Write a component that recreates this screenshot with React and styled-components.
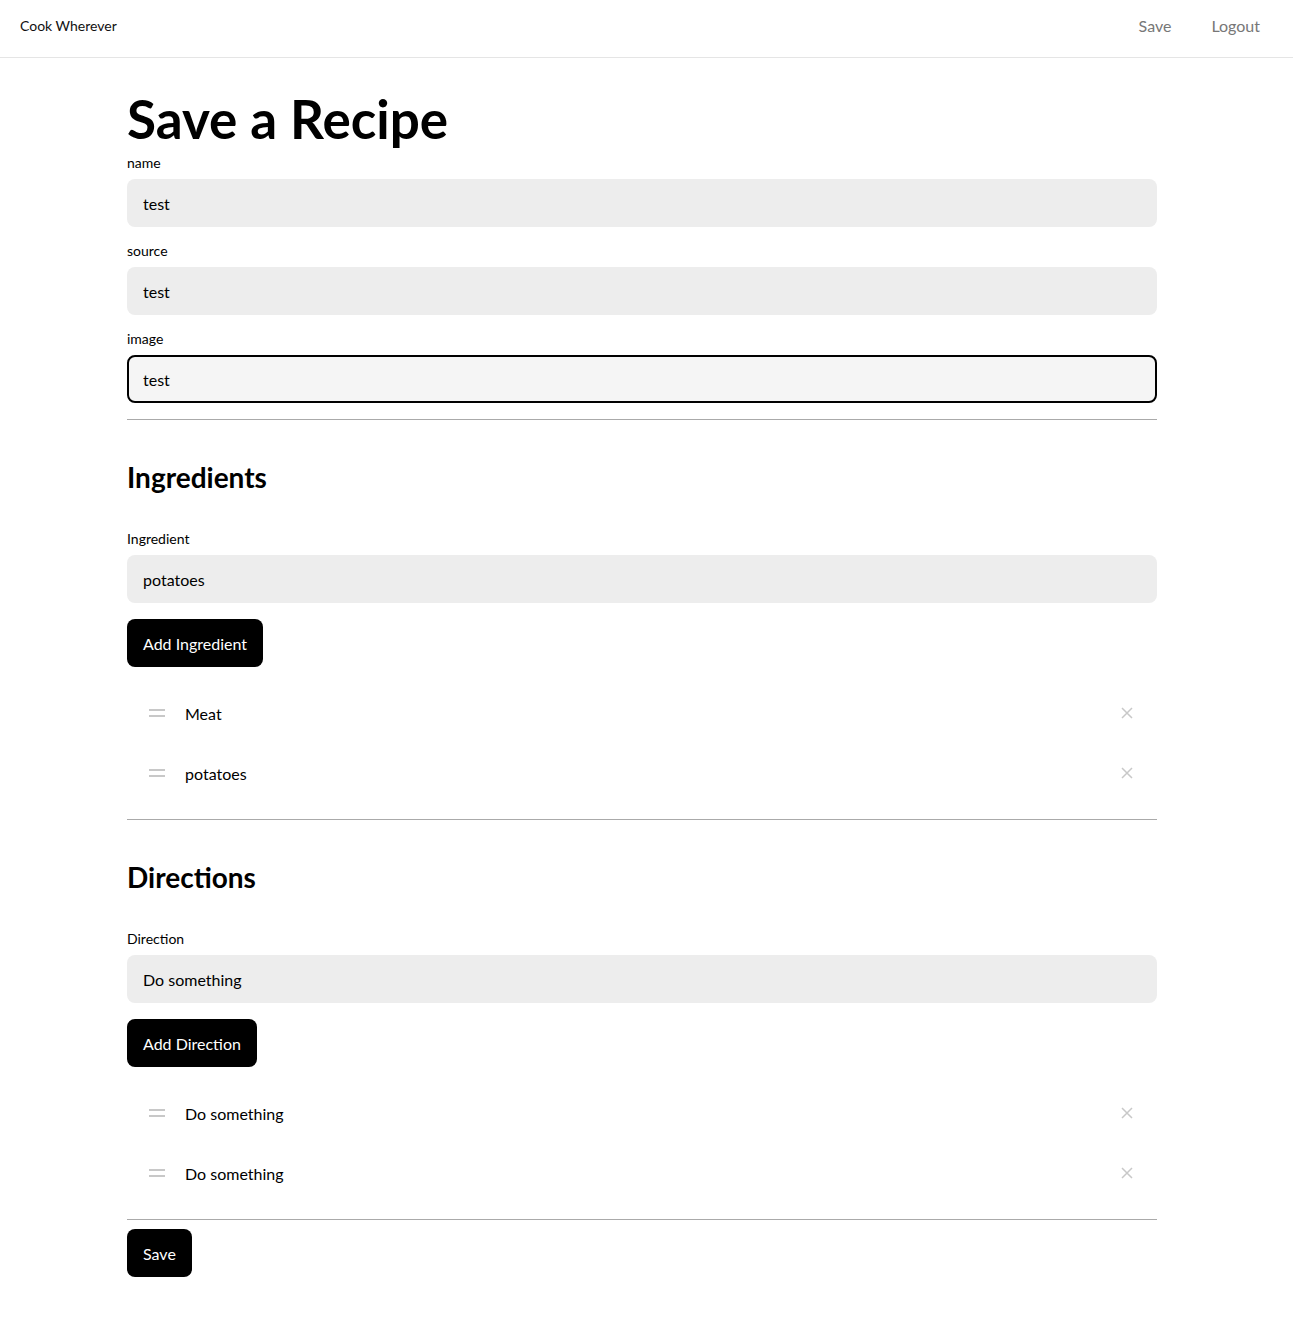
import React from "react";
import styled, { createGlobalStyle } from "styled-components";

const Global = createGlobalStyle`
  * { box-sizing: border-box; }
  body {
    margin: 0;
    font-family: Lato, "Noto Sans", sans-serif;
    color: #000;
    background: #fff;
  }
`;

const Header = styled.header`
  display: flex;
  align-items: center;
  justify-content: space-between;
  height: 58px;
  padding: 0 13px 7px 20px;
  border-bottom: 1px solid #e5e5e5;
`;

const Brand = styled.a`
  font-size: 14px;
  color: #111;
  text-decoration: none;
`;

const Nav = styled.nav`
  display: flex;
`;

const NavLink = styled.a`
  font-size: 16px;
  color: #777;
  padding: 0 20px;
  text-decoration: none;
`;

const Main = styled.main`
  width: 1030px;
  margin-left: 127px;
  padding-bottom: 49px;
`;

const Title = styled.h1`
  font-size: 53px;
  font-weight: 700;
  line-height: 1;
  margin: 34px 0 10px;
`;

const Field = styled.div`
  display: flex;
  flex-direction: column;
  margin-bottom: 16px;
`;

const Label = styled.label`
  font-size: 14px;
  line-height: 16px;
  margin-bottom: 8px;
`;

const Input = styled.input`
  height: 48px;
  border-radius: 8px;
  border: 2px solid ${(p) => (p.$focused ? "#000" : "transparent")};
  background: ${(p) => (p.$focused ? "#f5f5f5" : "#ededed")};
  padding: 0 14px;
  font-family: inherit;
  font-size: 16px;
  color: #000;
  outline: none;
  caret-color: #000;
`;

const Rule = styled.hr`
  border: none;
  border-top: 1px solid #aaa;
  margin: 0;
`;

const Heading = styled.h2`
  font-size: 28px;
  font-weight: 700;
  line-height: 36px;
  margin: 39px 0 36px;
`;

const Button = styled.button`
  align-self: flex-start;
  height: 48px;
  padding: 0 16px;
  border: none;
  border-radius: 8px;
  background: #000;
  color: #fff;
  font-family: inherit;
  font-size: 16px;
  cursor: pointer;
`;

const SaveBar = styled.div`
  display: flex;
  margin-top: 9px;
`;

const List = styled.ul`
  list-style: none;
  margin: 16px 0 16px;
  padding: 0;
`;

const Item = styled.li`
  display: flex;
  align-items: center;
  height: 60px;
  padding: 0 24px 0 22px;
  font-size: 16px;
`;

const ItemText = styled.span`
  flex: 1;
  margin-left: 20px;
`;

const Remove = styled.button`
  border: none;
  background: none;
  padding: 0;
  display: flex;
  cursor: pointer;
`;

const Handle = () => (
  <svg width="16" height="8" viewBox="0 0 16 8">
    <rect x="0" y="0" width="16" height="2" fill="#c8c8c8" />
    <rect x="0" y="6" width="16" height="2" fill="#c8c8c8" />
  </svg>
);

const Cross = () => (
  <svg width="12" height="12" viewBox="0 0 12 12">
    <path d="M1 1L11 11M11 1L1 11" stroke="#c8c8c8" strokeWidth="1.5" />
  </svg>
);

const EntryList = ({ items }) => (
  <List>
    {items.map((t, i) => (
      <Item key={i}>
        <Handle />
        <ItemText>{t}</ItemText>
        <Remove aria-label="remove">
          <Cross />
        </Remove>
      </Item>
    ))}
  </List>
);

const Section = ({ title, label, value, button, items }) => (
  <>
    <Heading>{title}</Heading>
    <Field>
      <Label>{label}</Label>
      <Input defaultValue={value} />
    </Field>
    <Button>{button}</Button>
    <EntryList items={items} />
    <Rule />
  </>
);

export default function App() {
  return (
    <>
      <Global />
      <Header>
        <Brand href="#">Cook Wherever</Brand>
        <Nav>
          <NavLink href="#">Save</NavLink>
          <NavLink href="#">Logout</NavLink>
        </Nav>
      </Header>
      <Main>
        <Title>Save a Recipe</Title>
        <Field>
          <Label>name</Label>
          <Input defaultValue="test" />
        </Field>
        <Field>
          <Label>source</Label>
          <Input defaultValue="test" />
        </Field>
        <Field>
          <Label>image</Label>
          <Input defaultValue="test" $focused autoFocus />
        </Field>
        <Rule />
        <Section
          title="Ingredients"
          label="Ingredient"
          value="potatoes"
          button="Add Ingredient"
          items={["Meat", "potatoes"]}
        />
        <Section
          title="Directions"
          label="Direction"
          value="Do something"
          button="Add Direction"
          items={["Do something", "Do something"]}
        />
        <SaveBar>
          <Button>Save</Button>
        </SaveBar>
      </Main>
    </>
  );
}
